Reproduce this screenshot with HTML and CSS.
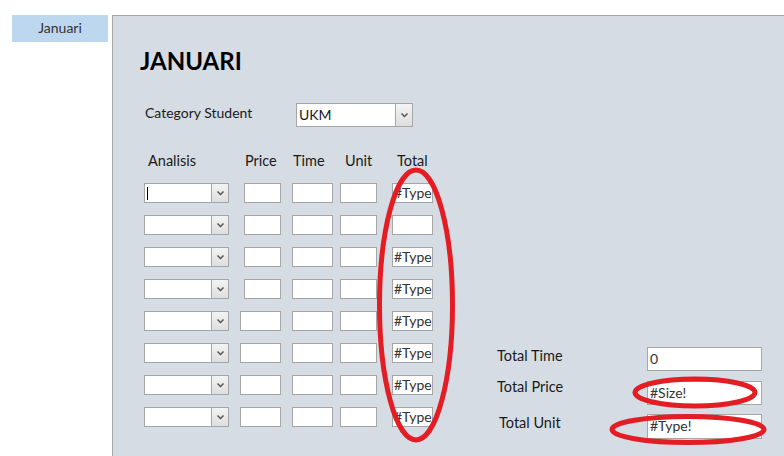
FILE: index.html
```html
<!DOCTYPE html>
<html>
<head>
<meta charset="utf-8">
<link rel="stylesheet" href="styles.css">
</head>
<body>
<div class="page">
  <div class="sidebar"><div class="tab">Januari</div></div>
  <div class="panel">
    <h1 class="title">JANUARI</h1>
    <div class="cat-row">
      <span class="cat-label">Category Student</span>
      <div class="combo combo-cat"><span class="combo-text">UKM</span><span class="combo-btn"><svg width="9" height="6" viewBox="0 0 9 6"><polyline points="1.5,1.5 4.5,4.5 7.5,1.5" fill="none" stroke="#555" stroke-width="1.5"/></svg></span></div>
    </div>
    <div class="main">
      <div class="grid">
        <div class="row head">
          <span class="c-an h-an">Analisis</span>
          <span class="c-pr h-pr">Price</span>
          <span class="c-ti h-ti">Time</span>
          <span class="c-un h-un">Unit</span>
          <span class="c-to h-to">Total</span>
        </div>
        <div class="row">
          <div class="combo c-an"><span class="caret"></span><span class="combo-btn"><svg width="9" height="6" viewBox="0 0 9 6"><polyline points="1.5,1.5 4.5,4.5 7.5,1.5" fill="none" stroke="#555" stroke-width="1.5"/></svg></span></div>
          <div class="box c-pr"></div><div class="box c-ti"></div><div class="box c-un"></div><div class="box c-to">#Type</div>
        </div>
        <div class="row">
          <div class="combo c-an"><span class="combo-btn"><svg width="9" height="6" viewBox="0 0 9 6"><polyline points="1.5,1.5 4.5,4.5 7.5,1.5" fill="none" stroke="#555" stroke-width="1.5"/></svg></span></div>
          <div class="box c-pr"></div><div class="box c-ti"></div><div class="box c-un"></div><div class="box c-to"></div>
        </div>
        <div class="row">
          <div class="combo c-an"><span class="combo-btn"><svg width="9" height="6" viewBox="0 0 9 6"><polyline points="1.5,1.5 4.5,4.5 7.5,1.5" fill="none" stroke="#555" stroke-width="1.5"/></svg></span></div>
          <div class="box c-pr"></div><div class="box c-ti"></div><div class="box c-un"></div><div class="box c-to">#Type</div>
        </div>
        <div class="row">
          <div class="combo c-an"><span class="combo-btn"><svg width="9" height="6" viewBox="0 0 9 6"><polyline points="1.5,1.5 4.5,4.5 7.5,1.5" fill="none" stroke="#555" stroke-width="1.5"/></svg></span></div>
          <div class="box c-pr"></div><div class="box c-ti"></div><div class="box c-un"></div><div class="box c-to">#Type</div>
        </div>
        <div class="row">
          <div class="combo c-an"><span class="combo-btn"><svg width="9" height="6" viewBox="0 0 9 6"><polyline points="1.5,1.5 4.5,4.5 7.5,1.5" fill="none" stroke="#555" stroke-width="1.5"/></svg></span></div>
          <div class="box c-pr wide"></div><div class="box c-ti"></div><div class="box c-un"></div><div class="box c-to">#Type</div>
        </div>
        <div class="row">
          <div class="combo c-an"><span class="combo-btn"><svg width="9" height="6" viewBox="0 0 9 6"><polyline points="1.5,1.5 4.5,4.5 7.5,1.5" fill="none" stroke="#555" stroke-width="1.5"/></svg></span></div>
          <div class="box c-pr wide"></div><div class="box c-ti"></div><div class="box c-un"></div><div class="box c-to">#Type</div>
        </div>
        <div class="row">
          <div class="combo c-an"><span class="combo-btn"><svg width="9" height="6" viewBox="0 0 9 6"><polyline points="1.5,1.5 4.5,4.5 7.5,1.5" fill="none" stroke="#555" stroke-width="1.5"/></svg></span></div>
          <div class="box c-pr wide"></div><div class="box c-ti"></div><div class="box c-un"></div><div class="box c-to">#Type</div>
        </div>
        <div class="row">
          <div class="combo c-an"><span class="combo-btn"><svg width="9" height="6" viewBox="0 0 9 6"><polyline points="1.5,1.5 4.5,4.5 7.5,1.5" fill="none" stroke="#555" stroke-width="1.5"/></svg></span></div>
          <div class="box c-pr wide"></div><div class="box c-ti"></div><div class="box c-un"></div><div class="box c-to">#Type</div>
        </div>
      </div>
      <div class="totals">
        <div class="trow"><span class="tlabel">Total Time</span><div class="tbox">0</div></div>
        <div class="trow trow-price"><span class="tlabel tl-price">Total Price</span><div class="tbox">#Size!</div></div>
        <div class="trow trow-unit"><span class="tlabel tl-unit">Total Unit</span><div class="tbox tbox-unit">#Type!</div></div>
      </div>
    </div>
  </div>
  <svg class="marks" width="784" height="456" viewBox="0 0 784 456">
    <ellipse cx="416" cy="305" rx="36.5" ry="135" fill="none" stroke="#e41c24" stroke-width="5"/>
    <ellipse cx="695" cy="392.5" rx="60" ry="13.5" fill="none" stroke="#e41c24" stroke-width="5"/>
    <ellipse cx="688" cy="429.5" rx="76" ry="13" fill="none" stroke="#e41c24" stroke-width="5"/>
  </svg>
</div>
</body>
</html>
```
FILE: styles.css
```css
* { box-sizing: border-box; }
html, body { margin: 0; padding: 0; background: #fff; }
body { font-family: Lato, "Open Sans", sans-serif; font-size: 14.5px; color: #1a1a1a; }
.page { position: relative; width: 784px; height: 456px; overflow: hidden; display: flex; }
.sidebar { width: 112px; padding: 15px 0 0 12px; flex: none; }
.tab { width: 96px; height: 27px; background: #bdd7ee; color: #333; font-size: 14px; display: flex; align-items: center; justify-content: center; padding-bottom: 2px; }
.panel { flex: 1; margin-top: 15px; background: #d6dce4; border-top: 1px solid #a6a6a6; border-left: 1px solid #a6a6a6; padding-left: 27px; }
.title { margin: 30px 0 0 0; font-size: 24px; line-height: 30px; font-weight: 700; color: #000; }
.cat-row { display: flex; align-items: center; margin-top: 27px; margin-left: 5px; height: 24px; }
.cat-label { width: 151px; font-size: 14px; padding-bottom: 6px; }
.combo { position: relative; background: #fff; border: 1px solid #a6a6a6; display: flex; justify-content: flex-end; }
.combo-cat { width: 117px; height: 24px; }
.combo-text { position: absolute; left: 2px; top: 2px; font-size: 14px; color: #1a1a1a; }
.combo-btn { width: 17px; height: 100%; background: linear-gradient(#f4f4f4, #dedede); border-left: 1px solid #a6a6a6; display: flex; align-items: center; justify-content: center; }
.caret { position: absolute; left: 2px; top: 3px; width: 1px; height: 13px; background: #000; }
.main { display: flex; align-items: flex-start; margin-top: 23px; }
.grid { display: flex; flex-direction: column; gap: 12px; width: 293px; }
.row { display: flex; height: 20px; margin-left: 4px; }
.row.head { height: 20px; margin-bottom: 1px; align-items: center; }
.c-an { width: 85px; }
.c-pr { width: 37px; margin-left: 15px; }
.c-pr.wide { width: 41px; margin-left: 11px; }
.c-ti { width: 41px; margin-left: 11px; }
.c-un { width: 37px; margin-left: 7px; }
.c-to { width: 41px; margin-left: 15px; }
.h-an { padding-left: 4px; }
.h-pr { padding-left: 1px; }
.h-ti { padding-left: 1px; }
.h-un { padding-left: 5px; }
.h-to { padding-left: 5px; }
.head span { white-space: nowrap; }
.box { height: 20px; background: #fff; border: 1px solid #a6a6a6; font-size: 14px; line-height: 18px; color: #333; padding-left: 1px; overflow: hidden; white-space: nowrap; }
.totals { margin-left: 64px; margin-top: 197px; display: flex; flex-direction: column; }
.trow { display: flex; align-items: flex-start; }
.trow-price { margin-top: 10px; }
.trow-unit { margin-top: 9px; }
.tlabel { width: 150px; line-height: 18px; }
.tl-price { margin-top: -3px; }
.tl-unit { padding-left: 2px; }
.tbox { width: 115px; height: 24px; background: #fff; border: 1px solid #a6a6a6; font-size: 14px; line-height: 22px; padding-left: 2px; color: #333; }
.tbox-unit { height: 25px; }
.marks { position: absolute; left: 0; top: 0; pointer-events: none; }
```
